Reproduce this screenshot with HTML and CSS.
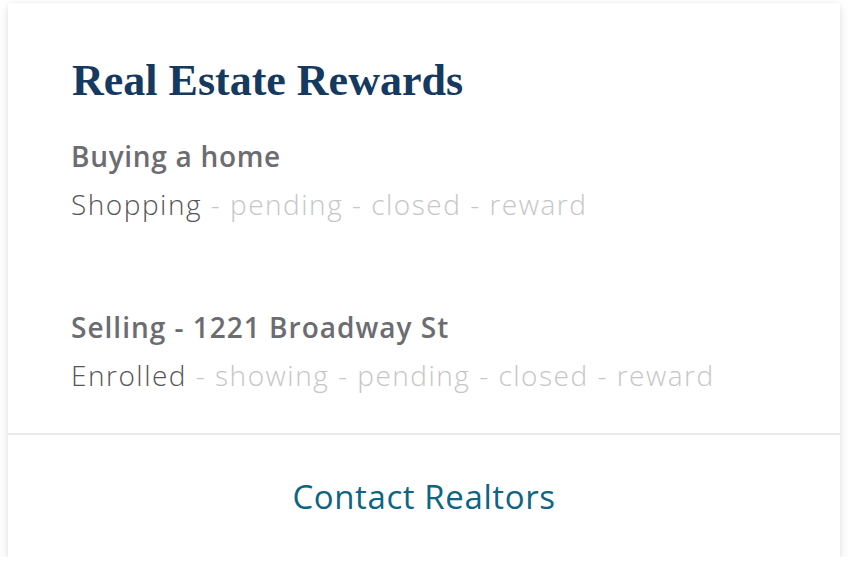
FILE: index.html
```html
<!DOCTYPE html>
<html>
<head>
<meta charset="utf-8">
<link rel="stylesheet" href="styles.css">
</head>
<body>
<div class="card">
  <div class="card-body">
    <h1 class="title">Real Estate Rewards</h1>
    <div class="group">
      <div class="label">Buying a home</div>
      <div class="steps"><span class="current">Shopping</span> - pending - closed - reward</div>
    </div>
    <div class="group group-second">
      <div class="label label-wide">Selling - 1221 Broadway St</div>
      <div class="steps"><span class="current">Enrolled</span> - showing - pending - closed - reward</div>
    </div>
  </div>
  <div class="card-footer">
    <a class="contact" href="#">Contact Realtors</a>
  </div>
</div>
</body>
</html>
```

FILE: styles.css
```css
html, body {
  margin: 0;
  padding: 0;
  background: #ffffff;
}
body {
  padding: 3px 8px 0 8px;
  font-family: "Open Sans", Lato, sans-serif;
}
.card {
  width: 832px;
  height: 554px;
  background: #ffffff;
  box-shadow: 0 4px 10px rgba(0, 0, 0, 0.12), 0 0 3px rgba(0, 0, 0, 0.05);
  display: flex;
  flex-direction: column;
}
.card-body {
  height: 432px;
  padding: 54px 63px 0 63px;
  box-sizing: border-box;
  border-bottom: 2px solid #ebebeb;
}
.title {
  margin: 0 0 0 1px;
  font-family: "Liberation Serif", serif;
  font-weight: bold;
  font-size: 44px;
  line-height: 48px;
  color: #163a5f;
}
.group {
  margin-top: 27px;
}
.group-second {
  margin-top: 75px;
}
.label {
  font-size: 28px;
  line-height: 48px;
  font-weight: 600;
  letter-spacing: 0.7px;
  color: #6c6c71;
}
.label-wide {
  letter-spacing: 1px;
}
.steps {
  font-size: 28px;
  line-height: 48px;
  font-weight: 300;
  letter-spacing: 1.5px;
  color: #c6c6c6;
}
.current {
  color: #555558;
}
.card-footer {
  flex: 1;
  display: flex;
  align-items: center;
  justify-content: center;
}
.contact {
  font-size: 33px;
  letter-spacing: 0.6px;
  color: #0d6483;
  text-decoration: none;
}
```
